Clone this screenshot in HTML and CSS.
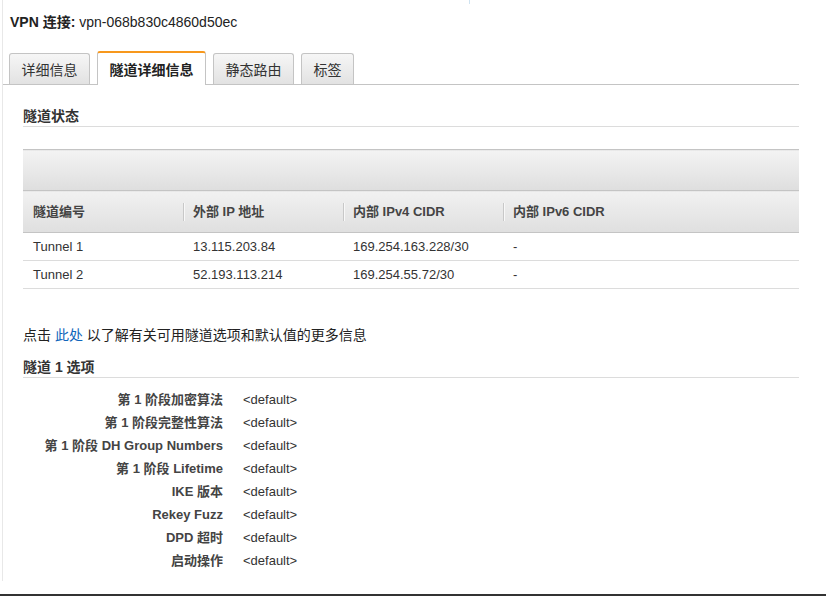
FILE: index.html
```html
<!DOCTYPE html>
<html lang="zh-CN">
<head>
<meta charset="utf-8">
<title>VPN 连接</title>
<link rel="stylesheet" href="styles.css">
</head>
<body>
<div class="screen">
  <span class="top-mark"></span>
  <div class="panel">
    <h1 class="title"><b>VPN 连接:</b> vpn-068b830c4860d50ec</h1>
    <div class="tabs">
      <div class="tab">详细信息</div>
      <div class="tab active">隧道详细信息</div>
      <div class="tab">静态路由</div>
      <div class="tab">标签</div>
    </div>
    <div class="content">
      <h2 class="section">隧道状态</h2>
      <table class="grid">
        <colgroup>
          <col class="c1"><col class="c2"><col class="c3"><col class="c4">
        </colgroup>
        <thead>
          <tr class="band"><th colspan="4"></th></tr>
          <tr class="head">
            <th><div class="hc first">隧道编号</div></th>
            <th><div class="hc">外部 IP 地址</div></th>
            <th><div class="hc">内部 IPv4 CIDR</div></th>
            <th><div class="hc">内部 IPv6 CIDR</div></th>
          </tr>
        </thead>
        <tbody>
          <tr><td>Tunnel 1</td><td>13.115.203.84</td><td>169.254.163.228/30</td><td>-</td></tr>
          <tr><td>Tunnel 2</td><td>52.193.113.214</td><td>169.254.55.72/30</td><td>-</td></tr>
        </tbody>
      </table>
      <p class="info">点击 <a href="#" class="link">此处</a> 以了解有关可用隧道选项和默认值的更多信息</p>
      <h2 class="section section2">隧道 1 选项</h2>
      <dl class="opts">
        <dt>第 1 阶段加密算法</dt><dd>&lt;default&gt;</dd>
        <dt>第 1 阶段完整性算法</dt><dd>&lt;default&gt;</dd>
        <dt>第 1 阶段 DH Group Numbers</dt><dd>&lt;default&gt;</dd>
        <dt>第 1 阶段 Lifetime</dt><dd>&lt;default&gt;</dd>
        <dt>IKE 版本</dt><dd>&lt;default&gt;</dd>
        <dt>Rekey Fuzz</dt><dd>&lt;default&gt;</dd>
        <dt>DPD 超时</dt><dd>&lt;default&gt;</dd>
        <dt>启动操作</dt><dd>&lt;default&gt;</dd>
      </dl>
    </div>
  </div>
  <div class="bottom-bar"></div>
</div>
</body>
</html>
```

FILE: styles.css
```css
* { box-sizing: border-box; }
html, body { margin: 0; padding: 0; background: #fff; }
body {
  font-family: "Liberation Sans", "Noto Sans CJK SC", Arial, sans-serif;
  color: #333;
  font-size: 13px;
}
.screen {
  position: relative;
  width: 826px;
  height: 596px;
  display: flex;
  flex-direction: column;
}
.top-mark {
  position: absolute;
  left: 469px;
  top: 0;
  width: 1px;
  height: 4px;
  background: #cfe3f1;
}
.panel {
  margin-left: 2px;
  width: 797px;
  height: 581px;
  flex: none;
  border-left: 1px solid #e8e8e8;
}
.title {
  margin: 0;
  padding: 13px 0 0 7px;
  font-size: 14px;
  line-height: 18px;
  font-weight: normal;
  color: #222;
}
.title b { font-weight: bold; }
.tabs {
  margin-top: 21px;
  height: 33px;
  display: flex;
  align-items: flex-end;
  padding-left: 6px;
  border-bottom: 1px solid #c4c4c4;
}
.tab {
  height: 31px;
  margin-right: 7px;
  padding: 1px 11.5px 0;
  line-height: 30px;
  font-size: 14px;
  color: #333;
  border: 1px solid #c4c4c4;
  border-bottom: none;
  border-radius: 3px 3px 0 0;
  background: linear-gradient(#f6f6f6, #e2e2e2);
}
.tab.active {
  height: 34px;
  margin-bottom: -1px;
  padding-top: 2px;
  line-height: 31px;
  font-weight: bold;
  color: #222;
  background: #fff;
  border-top: 2px solid #f7981d;
}
.content {
  padding-left: 20px;
}
.section {
  margin: 21px 0 0;
  font-size: 14px;
  line-height: 20px;
  font-weight: bold;
  color: #333;
  border-bottom: 1px solid #dcdcdc;
}
.grid {
  margin-top: 22px;
  width: 776px;
  border-collapse: collapse;
  table-layout: fixed;
}
.c1, .c2, .c3 { width: 160px; }
.grid th, .grid td { padding: 0; text-align: left; }
.band th {
  height: 41px;
  border-top: 1px solid #c4c4c4;
  background: linear-gradient(#f3f3f3, #dedede);
}
.head th {
  height: 42px;
  border-top: 1px solid #c4c4c4;
  border-bottom: 1px solid #c4c4c4;
  background: linear-gradient(#f1f1f1, #dfdfdf);
  font-weight: bold;
  color: #444;
  font-size: 13px;
}
.hc {
  line-height: 18px;
  padding-left: 9px;
  border-left: 1px solid #c8c8c8;
  box-shadow: inset 1px 0 0 #f8f8f8;
}
.hc.first { border-left: none; padding-left: 10px; box-shadow: none; }
.grid td {
  height: 28px;
  padding-left: 10px;
  border-bottom: 1px solid #dcdcdc;
  color: #333;
  line-height: 27px;
}
.info {
  margin: 36px 0 0;
  font-size: 14px;
  line-height: 20px;
  color: #222;
}
.link { color: #1066bb; text-decoration: none; }
.section2 { margin-top: 12px; }
.opts {
  margin: 10px 0 0;
  display: grid;
  grid-template-columns: 200px auto;
  column-gap: 20px;
  row-gap: 0;
}
.opts dt {
  text-align: right;
  font-weight: bold;
  color: #444;
  line-height: 23px;
}
.opts dd {
  margin: 0;
  color: #333;
  line-height: 23px;
}
.bottom-bar {
  margin-top: 13px;
  height: 2px;
  flex: none;
  background: #333;
}
```
